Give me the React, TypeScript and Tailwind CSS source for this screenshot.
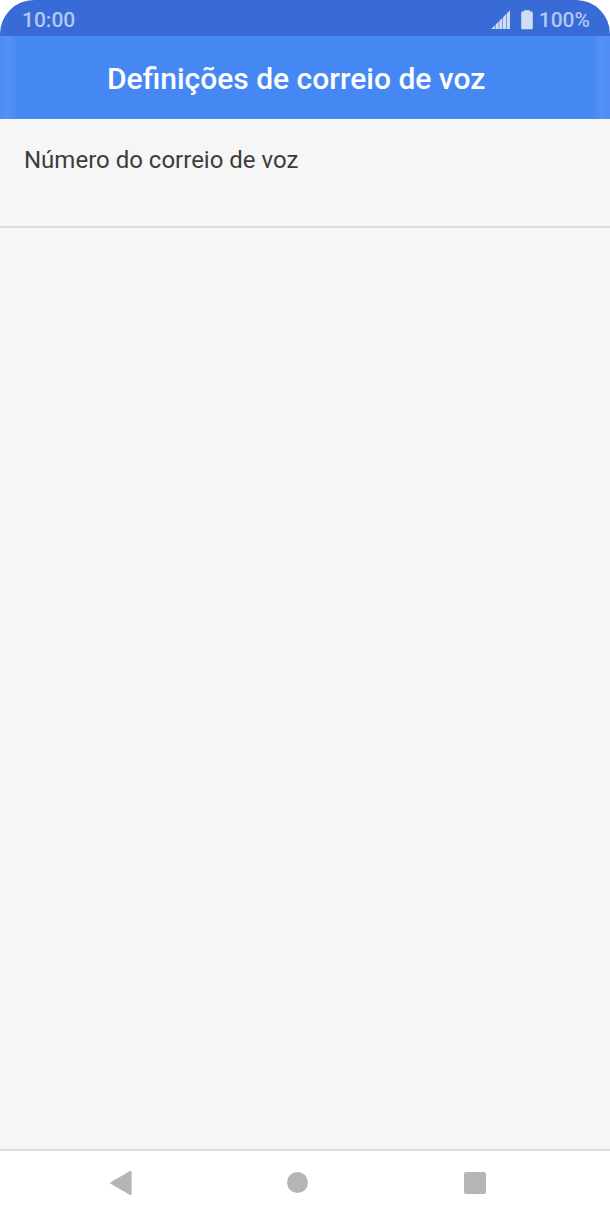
const navButton = "flex items-center justify-center h-full focus:outline-none focus-visible:bg-gray-100";

function SignalIcon() {
  return (
    <svg width="20" height="20" viewBox="0 0 20 20" fill="currentColor" aria-hidden="true">
      <path d="M0.3 19 L4.3 15 V19 Z" />
      <path d="M4.9 14.4 L7.7 11.6 V19 H4.9 Z" />
      <path d="M8.3 11 L11.4 7.9 V19 H8.3 Z" />
      <path d="M12 7.3 L15 4.3 V19 H12 Z" />
      <path d="M15.6 3.7 L19 0.3 V19 H15.6 Z" />
    </svg>
  );
}

function BatteryIcon() {
  return (
    <svg width="12" height="20" viewBox="0 0 12 20" fill="currentColor" aria-hidden="true">
      <path d="M3 0.3 H9 V1.6 H10.6 Q11.8 1.6 11.8 2.8 V18 Q11.8 19.2 10.6 19.2 H1.4 Q0.2 19.2 0.2 18 V2.8 Q0.2 1.6 1.4 1.6 H3 Z" />
    </svg>
  );
}

function StatusBar() {
  return (
    <div className="h-9 pt-1 pl-[22px] pr-5 flex items-center justify-between bg-[#386bd6] text-[#b3c8f4] text-[21px] leading-8 font-medium">
      <span>10:00</span>
      <div className="flex items-center">
        <span className="text-[#d0ddf8]">
          <SignalIcon />
        </span>
        <span className="ml-2.5 mr-1.5 text-[#d0ddf8]">
          <BatteryIcon />
        </span>
        <span>100%</span>
      </div>
    </div>
  );
}

function NavBar() {
  return (
    <nav className="h-[71px] pl-8 pr-[47px] pb-1.5 grid grid-cols-3 items-center bg-white border-t-2 border-[#dcdcdc] text-[#b5b5b5]">
      <button type="button" aria-label="Voltar" className={navButton}>
        <svg width="24" height="26" viewBox="0 0 24 26" fill="currentColor" aria-hidden="true">
          <path d="M1.6 12.2 L20.6 1.2 Q22.6 0.4 22.6 2 V24 Q22.6 25.6 20.6 24.8 L1.6 13.8 Q0.6 13 1.6 12.2 Z" />
        </svg>
      </button>
      <button type="button" aria-label="Início" className={navButton}>
        <span className="size-[21px] rounded-full bg-current" />
      </button>
      <button type="button" aria-label="Recentes" className={navButton}>
        <span className="size-[22px] rounded-xs bg-current" />
      </button>
    </nav>
  );
}

export default function App() {
  return (
    <div className="bg-white font-[Roboto,sans-serif]">
      <div className="min-h-screen flex flex-col overflow-hidden rounded-t-[34px] bg-[#f6f6f6]">
        <StatusBar />

        <header className="h-[83px] pl-[107px] pr-6 pt-0.5 flex items-center bg-[linear-gradient(to_right,#4f8df5_0px,#5391f6_9px,#4688f3_18px,#4688f3_calc(100%-18px),#5391f6_calc(100%-9px),#4f8df5_100%)]">
          <h1 className="text-3xl font-medium text-white whitespace-nowrap">Definições de correio de voz</h1>
        </header>

        <main className="flex-1">
          <button
            type="button"
            className="block w-full h-[109px] px-6 pt-[25px] pb-[50px] text-left text-2xl text-[#3c3c3c] border-b-2 border-[#dcdcdc]"
          >
            Número do correio de voz
          </button>
        </main>

        <NavBar />
      </div>
    </div>
  );
}
